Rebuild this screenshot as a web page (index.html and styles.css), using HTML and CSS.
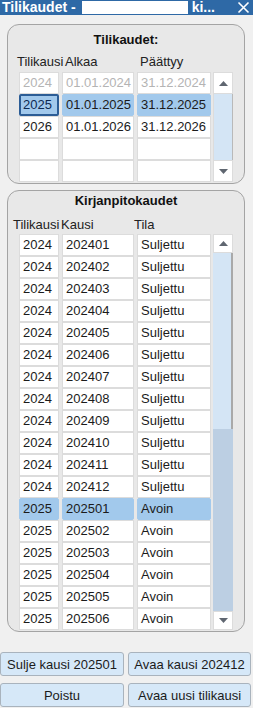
FILE: index.html
```html
<!DOCTYPE html>
<html lang="fi">
<head>
    <meta charset="UTF-8">
    <title>Tilikaudet</title>
    <link rel="stylesheet" href="styles.css">
</head>
<body>

    <div class="titlebar">
        <span class="title">Tilikaudet -</span>
        <span class="title-mask"></span>
        <span class="title title-end">ki...</span>
        <svg class="close" width="13" height="13" viewBox="0 0 13 13">
            <path d="M1.5 1.5 L11.5 11.5 M11.5 1.5 L1.5 11.5" stroke="#ffffff" stroke-width="1.6" fill="none"/>
        </svg>
    </div>

    <div class="content">
        <section class="panel panel-tilikaudet">
            <h2 class="panel-title">Tilikaudet:</h2>
            <div class="headers">
                <span>Tilikausi</span>
                <span>Alkaa</span>
                <span>Päättyy</span>
            </div>
            <div class="table">
                <div class="grid">
                    <div class="cell disabled">2024</div><div class="cell disabled">01.01.2024</div><div class="cell disabled">31.12.2024</div>
                    <div class="cell selected focused">2025</div><div class="cell selected">01.01.2025</div><div class="cell selected">31.12.2025</div>
                    <div class="cell">2026</div><div class="cell">01.01.2026</div><div class="cell">31.12.2026</div>
                    <div class="cell"></div><div class="cell"></div><div class="cell"></div>
                    <div class="cell"></div><div class="cell"></div><div class="cell"></div>
                </div>
                <div class="scrollbar">
                    <div class="scroll-btn">
                        <svg width="9" height="5" viewBox="0 0 9 5"><polygon points="4.5,0 9,5 0,5" fill="#5f6670"/></svg>
                    </div>
                    <div class="scroll-track"></div>
                    <div class="scroll-btn">
                        <svg width="9" height="5" viewBox="0 0 9 5"><polygon points="0,0 9,0 4.5,5" fill="#5f6670"/></svg>
                    </div>
                </div>
            </div>
        </section>

        <section class="panel panel-kaudet">
            <h2 class="panel-title">Kirjanpitokaudet</h2>
            <div class="headers">
                <span>Tilikausi</span>
                <span>Kausi</span>
                <span>Tila</span>
            </div>
            <div class="table">
                <div class="grid">
                    <div class="cell">2024</div><div class="cell">202401</div><div class="cell">Suljettu</div>
                    <div class="cell">2024</div><div class="cell">202402</div><div class="cell">Suljettu</div>
                    <div class="cell">2024</div><div class="cell">202403</div><div class="cell">Suljettu</div>
                    <div class="cell">2024</div><div class="cell">202404</div><div class="cell">Suljettu</div>
                    <div class="cell">2024</div><div class="cell">202405</div><div class="cell">Suljettu</div>
                    <div class="cell">2024</div><div class="cell">202406</div><div class="cell">Suljettu</div>
                    <div class="cell">2024</div><div class="cell">202407</div><div class="cell">Suljettu</div>
                    <div class="cell">2024</div><div class="cell">202408</div><div class="cell">Suljettu</div>
                    <div class="cell">2024</div><div class="cell">202409</div><div class="cell">Suljettu</div>
                    <div class="cell">2024</div><div class="cell">202410</div><div class="cell">Suljettu</div>
                    <div class="cell">2024</div><div class="cell">202411</div><div class="cell">Suljettu</div>
                    <div class="cell">2024</div><div class="cell">202412</div><div class="cell">Suljettu</div>
                    <div class="cell selected">2025</div><div class="cell selected">202501</div><div class="cell selected">Avoin</div>
                    <div class="cell">2025</div><div class="cell">202502</div><div class="cell">Avoin</div>
                    <div class="cell">2025</div><div class="cell">202503</div><div class="cell">Avoin</div>
                    <div class="cell">2025</div><div class="cell">202504</div><div class="cell">Avoin</div>
                    <div class="cell">2025</div><div class="cell">202505</div><div class="cell">Avoin</div>
                    <div class="cell">2025</div><div class="cell">202506</div><div class="cell">Avoin</div>
                </div>
                <div class="scrollbar">
                    <div class="scroll-btn">
                        <svg width="9" height="5" viewBox="0 0 9 5"><polygon points="4.5,0 9,5 0,5" fill="#5f6670"/></svg>
                    </div>
                    <div class="scroll-thumb"></div>
                    <div class="scroll-track dark"></div>
                    <div class="scroll-btn">
                        <svg width="9" height="5" viewBox="0 0 9 5"><polygon points="0,0 9,0 4.5,5" fill="#5f6670"/></svg>
                    </div>
                </div>
            </div>
        </section>

        <div class="buttons">
            <button type="button" class="btn">Sulje kausi 202501</button>
            <button type="button" class="btn">Avaa kausi 202412</button>
            <button type="button" class="btn">Poistu</button>
            <button type="button" class="btn">Avaa uusi tilikausi</button>
        </div>
    </div>

</body>
</html>
```

FILE: styles.css
```css
body {
    margin: 0;
    width: 253px;
    height: 708px;
    overflow: hidden;
    font-family: "Liberation Sans", Arial, sans-serif;
    font-size: 13px;
    color: #1b1b1b;
    background-color: #f0f0f0;
}

.titlebar {
    display: flex;
    align-items: center;
    height: 15px;
    overflow: hidden;
    background-color: #2e69a6;
    padding-left: 2px;
}

.title {
    font-size: 14px;
    font-weight: bold;
    color: #ffffff;
    line-height: 15px;
    white-space: nowrap;
}

.title-mask {
    width: 106px;
    height: 13px;
    margin-left: 6px;
    background-color: #ffffff;
}

.title-end {
    margin-left: 4px;
}

.close {
    margin-left: auto;
    margin-right: 3px;
}

.content {
    padding: 9px 0 0 0;
}

.panel {
    box-sizing: border-box;
    margin: 0 8px 0 7px;
    border: 1px solid #a4a4a4;
    border-radius: 12px;
    background-color: #e8e8e8;
}

.panel-tilikaudet {
    height: 160px;
    padding-top: 7px;
}

.panel-kaudet {
    height: 442px;
    margin-top: 6px;
    padding-top: 2px;
}

.panel-title {
    margin: 0;
    font-size: 13px;
    font-weight: bold;
    line-height: 16px;
    text-align: center;
    color: #111111;
}

.headers {
    display: grid;
    line-height: 16px;
    color: #222222;
}

.panel-tilikaudet .headers {
    grid-template-columns: 48px 75px auto;
    padding-left: 9px;
    margin-top: 6px;
    margin-bottom: 2px;
}

.panel-kaudet .headers {
    grid-template-columns: 48px 73px auto;
    padding-left: 5px;
    margin-top: 8px;
    margin-bottom: 1px;
}

.table {
    display: flex;
    padding-left: 11px;
}

.grid {
    display: grid;
    grid-template-columns: 40px 72px 74px;
    grid-auto-rows: 22px;
    column-gap: 3px;
}

.cell {
    box-sizing: border-box;
    border: 1px solid #dcdcdc;
    background-color: #ffffff;
    padding-left: 3px;
    line-height: 20px;
    white-space: nowrap;
}

.cell.disabled {
    color: #b4b4b4;
}

.cell.selected {
    background-color: #a2c9ec;
    border-color: #a2c9ec;
    border-radius: 2px;
}

.cell.focused {
    border: 2px solid #2c5d96;
    padding-left: 2px;
    line-height: 18px;
    color: #0d2a52;
}

.scrollbar {
    display: flex;
    flex-direction: column;
    width: 20px;
    margin-left: 2px;
}

.scroll-btn {
    box-sizing: border-box;
    height: 22px;
    display: flex;
    justify-content: center;
    align-items: center;
    background-color: #ffffff;
    border: 1px solid #dcdcdc;
}

.scroll-track {
    flex: 1;
    box-sizing: border-box;
    background-color: #d4e5f5;
    border-left: 1px solid #dcdcdc;
    border-right: 1px solid #b9b9b9;
}

.panel-kaudet .scroll-btn {
    height: 19px;
}

.scroll-thumb {
    height: 176px;
    box-sizing: border-box;
    background-color: #d4e5f5;
    border-right: 2px solid #a9a9a9;
}

.scroll-track.dark {
    background-color: #bccfe3;
    border: none;
}

.buttons {
    display: grid;
    grid-template-columns: 124px 123px;
    grid-auto-rows: 24px;
    column-gap: 4px;
    row-gap: 7px;
    margin-top: 20px;
}

.btn {
    box-sizing: border-box;
    margin: 0;
    padding: 0;
    font-family: "Liberation Sans", Arial, sans-serif;
    font-size: 13px;
    color: #1b1b1b;
    background-color: #d6e8f8;
    border: 1px solid #a9b3bd;
    border-radius: 3px;
}
```
